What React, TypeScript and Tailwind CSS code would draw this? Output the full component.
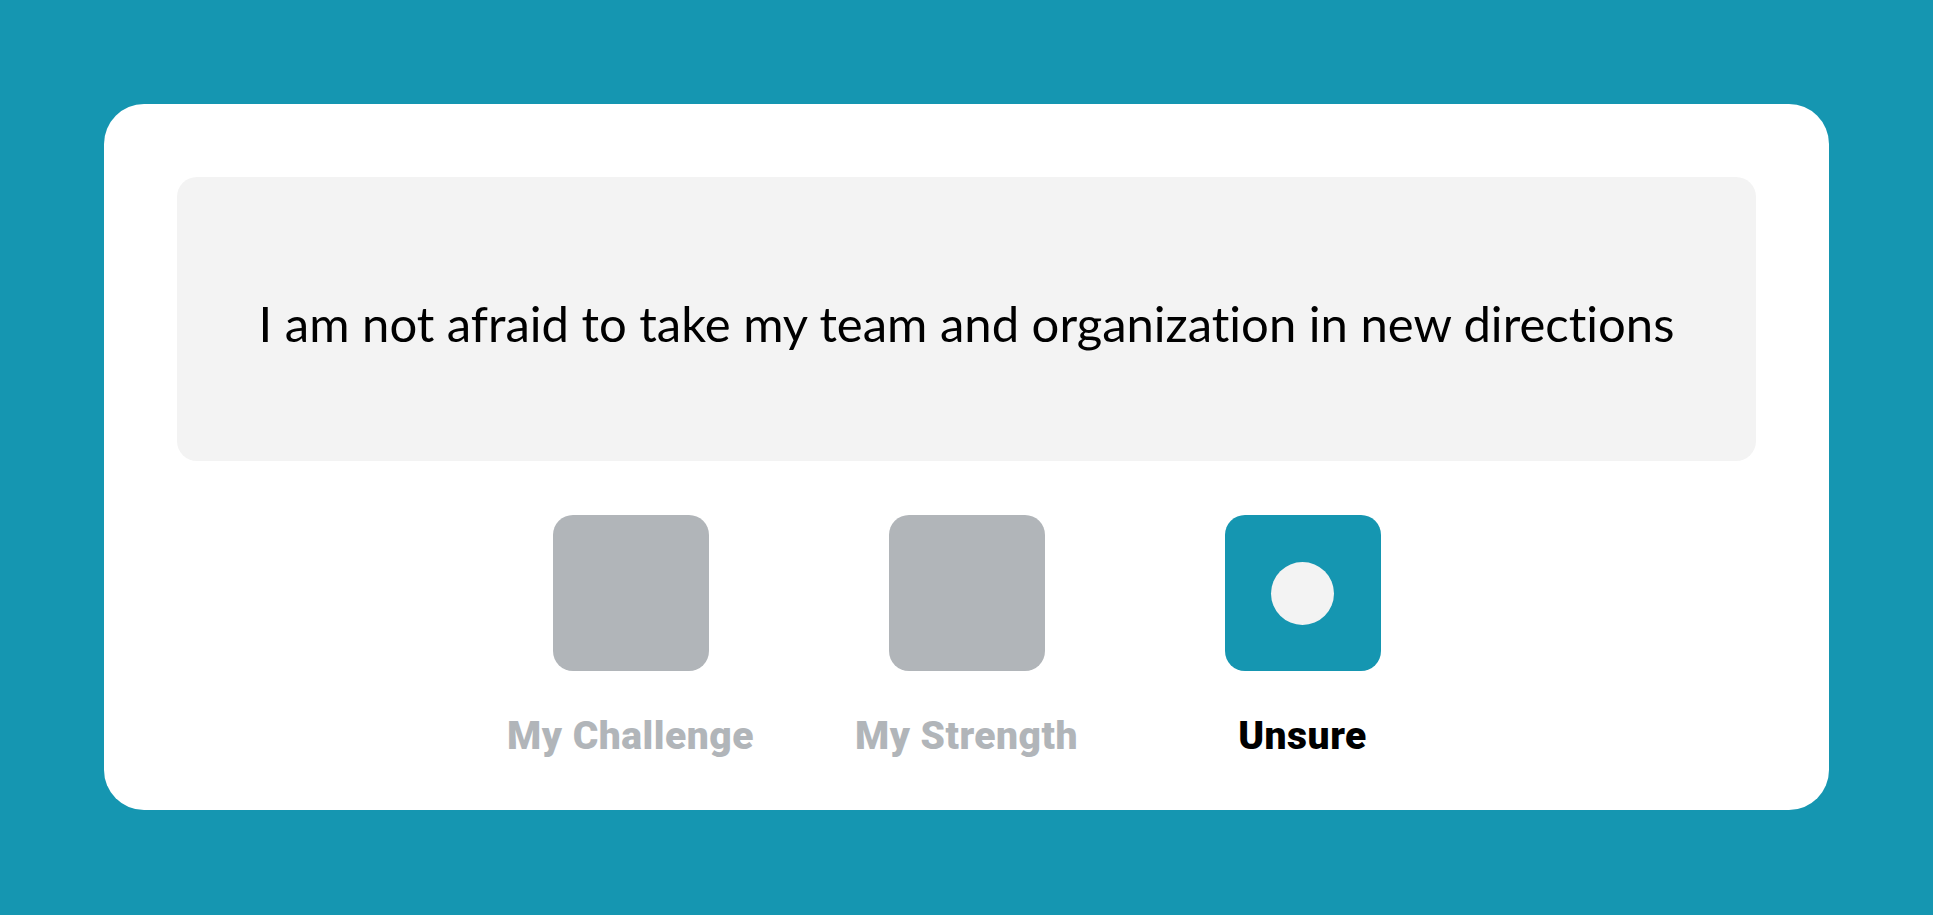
export default function App() {
  const options = [
    { label: "My Challenge", selected: false },
    { label: "My Strength", selected: false },
    { label: "Unsure", selected: true },
  ];

  return (
    <div className="h-[915px] w-full bg-[#1596b1] p-[104px] font-['Lato',sans-serif]">
      <div className="h-[706px] rounded-[40px] bg-white p-[73px]">
        {/* Statement */}
        <div className="flex h-[284px] items-center justify-center rounded-[20px] bg-[#f3f3f3] pt-[9px]">
          <p className="text-[49px] leading-none text-black [font-variant-ligatures:none]">
            I am not afraid to take my team and organization in new directions
          </p>
        </div>

        {/* Choices */}
        <div className="mt-[54px] flex justify-center gap-[180px]">
          {options.map((opt) => (
            <div key={opt.label} className="flex w-[156px] flex-col items-center">
              <div
                className={
                  opt.selected
                    ? "flex h-[156px] w-[156px] items-center justify-center rounded-[20px] bg-[#1596b1]"
                    : "h-[156px] w-[156px] rounded-[20px] bg-[#b1b5b9]"
                }
              >
                {opt.selected && <div className="h-[63px] w-[63px] rounded-full bg-[#f3f3f3]" />}
              </div>
              <span
                className={
                  opt.selected
                    ? "mt-[46px] whitespace-nowrap font-['Roboto',sans-serif] text-[39px] font-black leading-none tracking-[0.5px] text-black"
                    : "mt-[46px] whitespace-nowrap font-['Roboto',sans-serif] text-[39px] font-black leading-none tracking-[0.5px] text-[#b1b5b9]"
                }
              >
                {opt.label}
              </span>
            </div>
          ))}
        </div>
      </div>
    </div>
  );
}
